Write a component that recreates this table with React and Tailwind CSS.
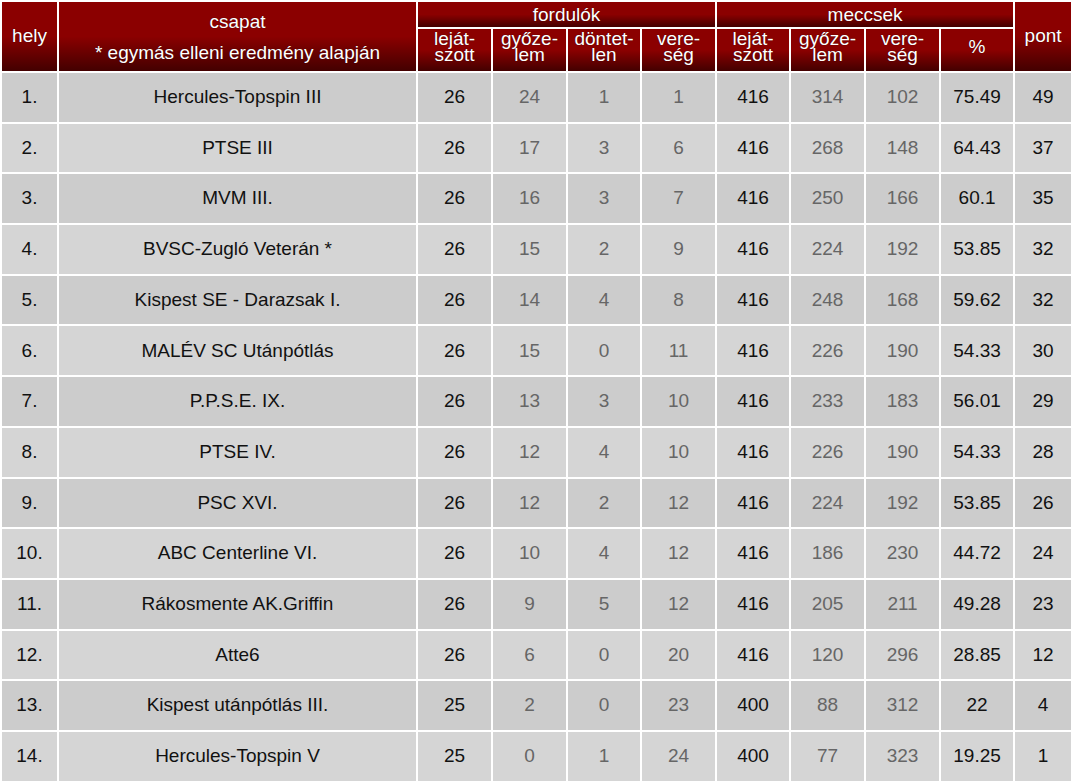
import React from 'react';

const rows = [
  ['1.', 'Hercules-Topspin III', 26, 24, 1, 1, 416, 314, 102, '75.49', 49],
  ['2.', 'PTSE III', 26, 17, 3, 6, 416, 268, 148, '64.43', 37],
  ['3.', 'MVM III.', 26, 16, 3, 7, 416, 250, 166, '60.1', 35],
  ['4.', 'BVSC-Zugló Veterán *', 26, 15, 2, 9, 416, 224, 192, '53.85', 32],
  ['5.', 'Kispest SE - Darazsak I.', 26, 14, 4, 8, 416, 248, 168, '59.62', 32],
  ['6.', 'MALÉV SC Utánpótlás', 26, 15, 0, 11, 416, 226, 190, '54.33', 30],
  ['7.', 'P.P.S.E. IX.', 26, 13, 3, 10, 416, 233, 183, '56.01', 29],
  ['8.', 'PTSE IV.', 26, 12, 4, 10, 416, 226, 190, '54.33', 28],
  ['9.', 'PSC XVI.', 26, 12, 2, 12, 416, 224, 192, '53.85', 26],
  ['10.', 'ABC Centerline VI.', 26, 10, 4, 12, 416, 186, 230, '44.72', 24],
  ['11.', 'Rákosmente AK.Griffin', 26, 9, 5, 12, 416, 205, 211, '49.28', 23],
  ['12.', 'Atte6', 26, 6, 0, 20, 416, 120, 296, '28.85', 12],
  ['13.', 'Kispest utánpótlás III.', 25, 2, 0, 23, 400, 88, 312, '22', 4],
  ['14.', 'Hercules-Topspin V', 25, 0, 1, 24, 400, 77, 323, '19.25', 1],
];

// szürke számok: győzelem / döntetlen / vereség oszlopok
const grayCols = [3, 4, 5, 7, 8];

const widths = ['w-[55px]', 'w-[357px]', 'w-[73px]', 'w-[73px]', 'w-[72px]', 'w-[73px]', 'w-[72px]', 'w-[73px]', 'w-[73px]', 'w-[72px]', 'w-[56px]'];

const head = 'p-0 text-white font-normal text-[19px] [text-shadow:0_0_1px_#300] bg-[linear-gradient(to_bottom,#8b0000_50%,#430000)] align-middle text-center';

const Sub = ({ a, b }) => (
  <th className={`${head} leading-[16px]`}>
    <div className="-mt-[6px]">
      <div>{a}</div>
      {b && <div>{b}</div>}
    </div>
  </th>
);

export default function App() {
  return (
    <div className="bg-white w-[1073px] font-['Liberation_Sans',Arial,sans-serif]">
      <table className="table-fixed border-separate border-spacing-[2px] w-[1073px]">
        <colgroup>
          {widths.map((w, i) => (
            <col key={i} className={w} />
          ))}
        </colgroup>
        <thead>
          <tr className="h-[25px]">
            <th rowSpan={2} className={head}>hely</th>
            <th rowSpan={2} className={head}>
              <div className="flex flex-col gap-[10px] leading-[21px]">
                <span>csapat</span>
                <span>* egymás elleni eredmény alapján</span>
              </div>
            </th>
            <th colSpan={4} className={`${head} leading-[20px]`}>fordulók</th>
            <th colSpan={4} className={`${head} leading-[20px]`}>meccsek</th>
            <th rowSpan={2} className={head}>pont</th>
          </tr>
          <tr className="h-[42px]">
            <Sub a="leját-" b="szott" />
            <Sub a="győze-" b="lem" />
            <Sub a="döntet-" b="len" />
            <Sub a="vere-" b="ség" />
            <Sub a="leját-" b="szott" />
            <Sub a="győze-" b="lem" />
            <Sub a="vere-" b="ség" />
            <Sub a="%" />
          </tr>
        </thead>
        <tbody>
          {rows.map((r, i) => (
            <tr key={r[0]} className={`h-[48.7px] ${i % 2 === 0 ? 'bg-[#cccccc]' : 'bg-[#d5d5d5]'}`}>
              {r.map((v, j) => (
                <td
                  key={j}
                  className={`p-0 text-center align-middle text-[19px] ${grayCols.includes(j) ? 'text-[#666666]' : 'text-[#111111]'}`}
                >
                  {v}
                </td>
              ))}
            </tr>
          ))}
        </tbody>
      </table>
    </div>
  );
}
